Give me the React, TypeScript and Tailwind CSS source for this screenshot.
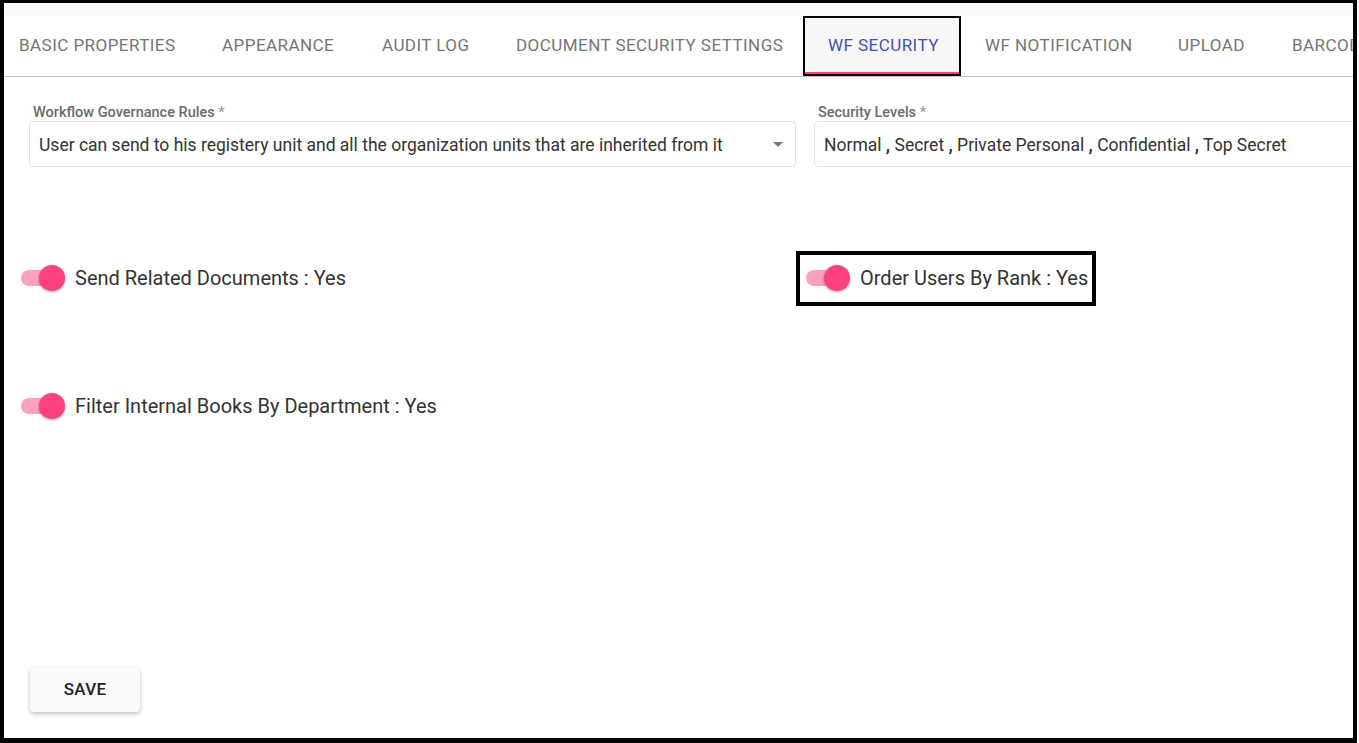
import React from "react";

const tabs = [
  { label: "BASIC PROPERTIES", w: 203 },
  { label: "APPEARANCE", w: 160 },
  { label: "AUDIT LOG", w: 134 },
  { label: "DOCUMENT SECURITY SETTINGS", w: 311 },
  { label: "WF SECURITY", w: 158, active: true },
  { label: "WF NOTIFICATION", w: 193 },
  { label: "UPLOAD", w: 114 },
  { label: "BARCODE", w: 140 },
];

function Toggle() {
  return (
    <div className="relative w-[44px] h-[26px] shrink-0">
      <div className="absolute left-0 top-[5px] w-[40px] h-[16px] rounded-full bg-[#ff9fbf]" />
      <div className="absolute right-0 top-0 w-[26px] h-[26px] rounded-full bg-[#ff4081] shadow-[0_1px_3px_rgba(0,0,0,0.35)]" />
    </div>
  );
}

function ToggleRow({ label }: { label: string }) {
  return (
    <div className="flex items-center gap-[10px] -ml-[8px] h-[40px]">
      <Toggle />
      <span className="text-[20px] text-[#333333] whitespace-nowrap">{label}</span>
    </div>
  );
}

export default function App() {
  return (
    <div
      className="w-[1357px] h-[743px] bg-white border-black border-t-[3px] border-l-[4px] border-r-[4px] border-b-[5px] overflow-hidden flex flex-col"
      style={{ fontFamily: "Roboto, 'Liberation Sans', sans-serif" }}
    >
      <div className="h-[13px] bg-[#fafafa] shrink-0" />
      <div className="h-[61px] shrink-0 border-b border-[#c4c4c4] overflow-hidden">
        <div className="flex h-[60px] -ml-[9px]">
          {tabs.map((t) =>
            t.active ? (
              <div
                key={t.label}
                style={{ width: t.w }}
                className="relative shrink-0 h-full flex items-center pl-[23px] border-2 border-black bg-[#f7f7f7] text-[#3f51b5] text-[17px] tracking-[0.45px] whitespace-nowrap"
              >
                {t.label}
                <div className="absolute left-0 right-0 bottom-0 h-[2px] bg-[#ff4081]" />
              </div>
            ) : (
              <div
                key={t.label}
                style={{ width: t.w }}
                className="shrink-0 h-full flex items-center pl-[24px] text-[#757575] text-[17px] tracking-[0.45px] whitespace-nowrap"
              >
                {t.label}
              </div>
            )
          )}
        </div>
      </div>

      <div className="flex-1 flex flex-col pl-[25px] pt-[26px]">
        <div className="grid grid-cols-[767px_767px] gap-x-[18px]">
          <div>
            <div className="text-[14.5px] font-medium text-[#6b6b6b] leading-[16px] pl-[4px] mb-[2px] pt-[2px] h-[16px] whitespace-nowrap">
              Workflow Governance Rules <span className="text-[#a0a0a0]">*</span>
            </div>
            <div className="h-[46px] border border-[#e3e3e3] rounded-[4px] flex items-center pl-[9px] pr-[12px]">
              <span className="flex-1 text-[17.5px] text-[#333333] whitespace-nowrap pt-[2px]">
                User can send to his registery unit and all the organization units that are inherited from it
              </span>
              <svg width="10" height="5" viewBox="0 0 10 5">
                <path d="M0 0 L10 0 L5 5 Z" fill="#757575" />
              </svg>
            </div>
          </div>
          <div>
            <div className="text-[14.5px] font-medium text-[#6b6b6b] leading-[16px] pl-[4px] mb-[2px] pt-[2px] h-[16px] whitespace-nowrap">
              Security Levels <span className="text-[#a0a0a0]">*</span>
            </div>
            <div className="h-[46px] border border-[#e3e3e3] rounded-[4px] flex items-center pl-[9px]">
              <span className="text-[17.5px] text-[#333333] whitespace-nowrap pt-[2px]">
                Normal <b className="font-bold">,</b> Secret <b className="font-bold">,</b> Private Personal{" "}
                <b className="font-bold">,</b> Confidential <b className="font-bold">,</b> Top Secret
              </span>
            </div>
          </div>
        </div>

        <div className="grid grid-cols-[767px_767px] gap-x-[18px] mt-[91px]">
          <ToggleRow label="Send Related Documents : Yes" />
          <div className="relative">
            <div className="absolute -left-[18px] top-[-7px] w-[300px] h-[55px] border-4 border-black" />
            <ToggleRow label="Order Users By Rank : Yes" />
          </div>
        </div>

        <div className="mt-[88px]">
          <ToggleRow label="Filter Internal Books By Department : Yes" />
        </div>

        <div className="mt-auto mb-[26px] pl-[1px]">
          <button className="w-[110px] h-[45px] rounded-[4px] bg-[#fafafa] shadow-[0_2px_4px_rgba(0,0,0,0.25)] text-[17px] font-medium text-[#222222] tracking-[0.3px]">
            SAVE
          </button>
        </div>
      </div>
    </div>
  );
}
